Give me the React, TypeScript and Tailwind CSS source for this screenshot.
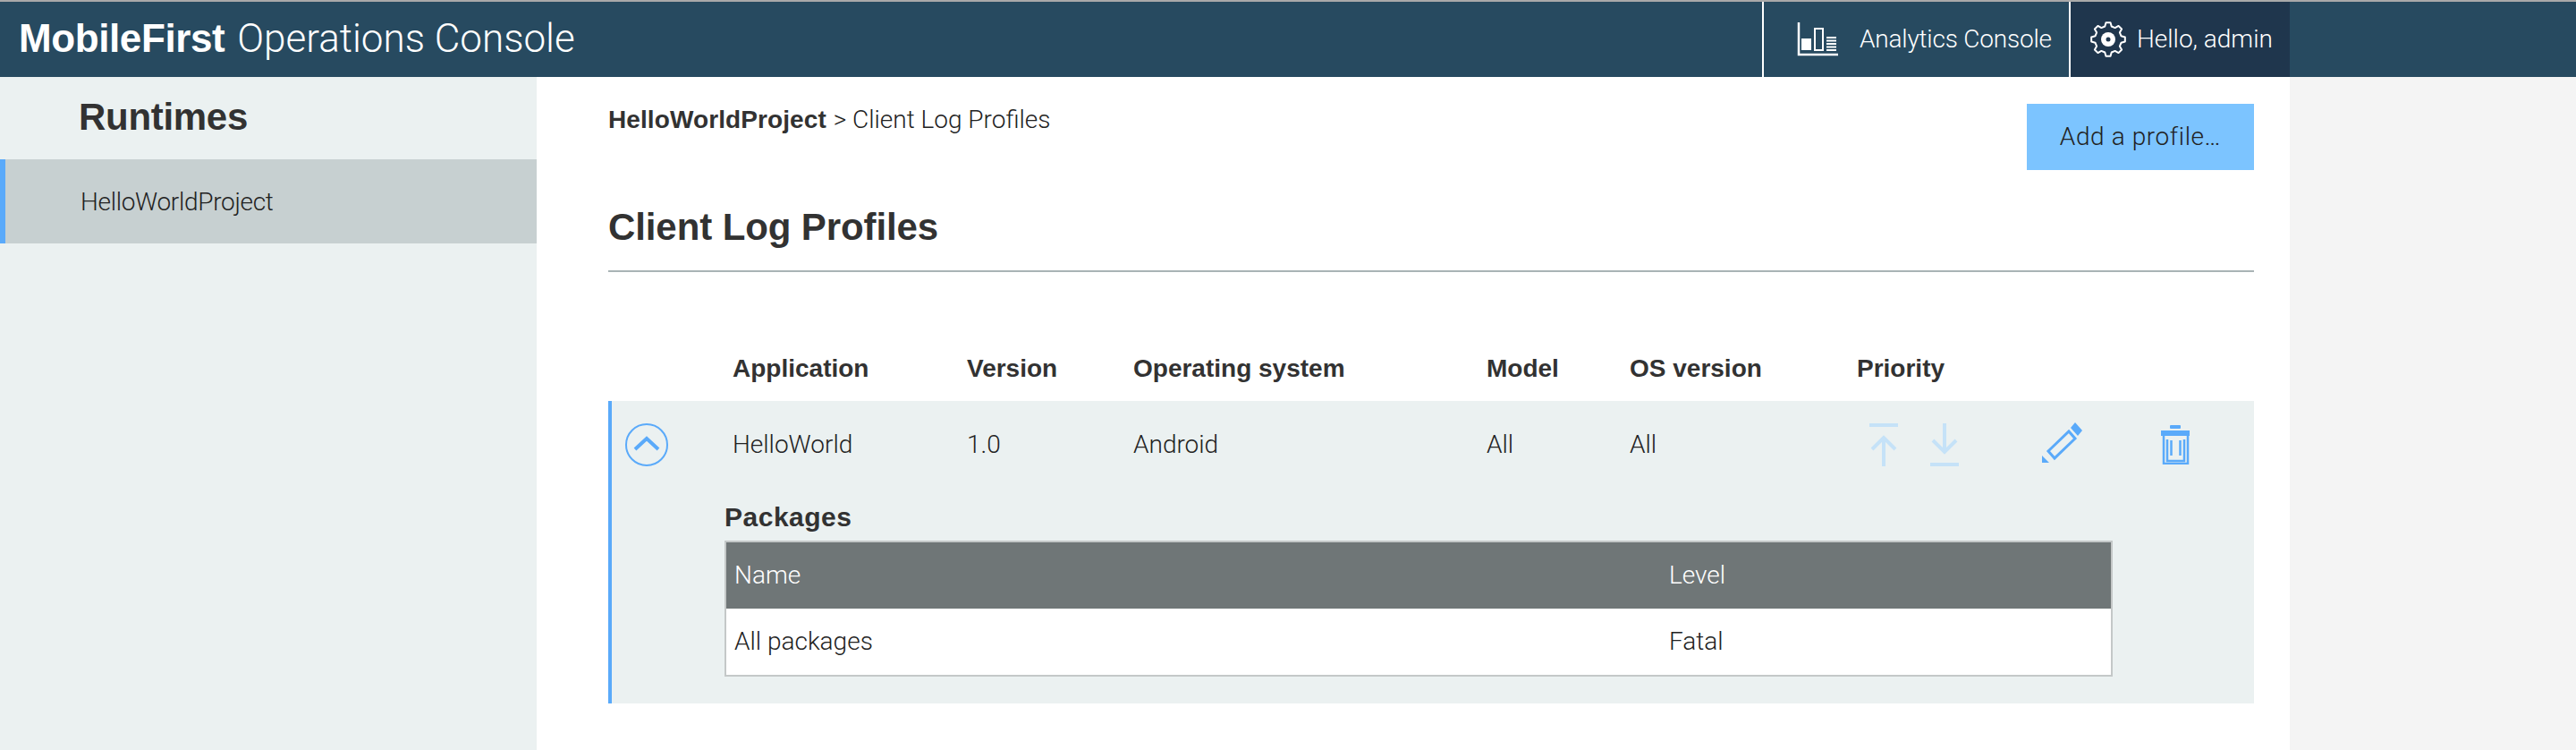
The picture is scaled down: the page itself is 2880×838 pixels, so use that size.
import React from "react";

const sans = "font-['Liberation_Sans',Arial,sans-serif]";
const thin = "font-['Roboto',Arial,sans-serif] font-light";

function ChartIcon() {
  return (
    <svg width="46" height="38" viewBox="0 0 46 38" fill="none" className="block">
      <path d="M2 0V36H46" stroke="#fff" strokeWidth="2.5" />
      <rect x="5" y="18" width="11" height="13" fill="#fff" />
      <rect x="20" y="7" width="9" height="24" stroke="#fff" strokeWidth="2" />
      <path d="M33 17H44M33 20.5H44M33 24H44M33 27.5H44M33 31H44" stroke="#fff" strokeWidth="2" />
    </svg>
  );
}

function gearPath() {
  const pts: string[] = [];
  const teeth = 8;
  const step = (Math.PI * 2) / teeth;
  for (let i = 0; i < teeth; i++) {
    const a = i * step - Math.PI / 2;
    const p = (r: number, d: number) => {
      const x = 21 + r * Math.cos(a + d * step);
      const y = 21 + r * Math.sin(a + d * step);
      return `${x.toFixed(2)} ${y.toFixed(2)}`;
    };
    pts.push(p(15, -0.32), p(19, -0.17), p(19, 0.17), p(15, 0.32));
  }
  return `M${pts.join("L")}Z`;
}

function GearIcon() {
  return (
    <svg width="42" height="42" viewBox="0 0 42 42" fill="none" className="block">
      <path d={gearPath()} stroke="#fff" strokeWidth="2" strokeLinejoin="round" />
      <circle cx="21" cy="21" r="8" fill="#fff" />
      <circle cx="21" cy="21" r="2.5" fill="#1f364d" />
    </svg>
  );
}

export default function App() {
  return (
    <div className={`${sans} flex h-[838px] w-[2880px] flex-col overflow-hidden bg-[#f4f4f4] text-[#323232]`}>
      <header className="flex h-[86px] shrink-0 items-stretch border-t-2 border-[#a9a9a9] bg-[#274a60] text-white">
        <div className="flex w-[1970px] items-center pb-[2px] pl-[21px] text-[44px]">
          <b className="tracking-[-0.4px]">MobileFirst</b>
          <span className={`${thin} ml-[14px]`}>Operations Console</span>
        </div>
        <div className={`${thin} flex w-[345px] items-center border-x-2 border-white pl-[37px] text-[28px]`}>
          <ChartIcon />
          <span className="ml-[24px] tracking-[-0.2px]">Analytics Console</span>
        </div>
        <div className={`${thin} flex w-[245px] items-center bg-[#1f364d] pl-[21px] text-[28px]`}>
          <GearIcon />
          <span className="ml-[11px]">Hello, admin</span>
        </div>
      </header>

      <div className="flex min-h-0 flex-1">
        <aside className="w-[600px] shrink-0 bg-[#ebf1f1]">
          <h2 className="flex h-[92px] items-center pb-[4px] pl-[88px] text-[42px] font-bold tracking-[-0.3px]">Runtimes</h2>
          <div className={`${thin} flex h-[94px] items-center border-l-[6px] border-[#5aaafa] bg-[#c7d0d1] pl-[84px] pt-[2px] text-[28px] tracking-[-0.3px] text-[#222]`}>
            HelloWorldProject
          </div>
        </aside>

        <main className="w-[1960px] shrink-0 bg-white pl-[80px] pr-[40px]">
          <div className="flex h-[104px] items-start justify-between pt-[30px]">
            <div className="-mt-[3px] text-[28px]">
              <b className="tracking-[0.1px]">HelloWorldProject</b> <span className={`${thin} text-[#222]`}>&gt; Client Log Profiles</span>
            </div>
            <button className={`${thin} flex h-[74px] w-[254px] items-center justify-center bg-[#7cc4ff] text-[28px] tracking-[0.6px] text-[#222]`}>
              Add a profile…
            </button>
          </div>
          <h1 className="flex h-[114px] items-center border-b-2 border-[#a9b4b5] pt-[14px] text-[42px] font-bold tracking-[-0.1px]">
            Client Log Profiles
          </h1>

          <div className="mt-[72px] flex h-[72px] items-center text-[28px] font-bold">
            <span className="ml-[139px] w-[262px]">Application</span>
            <span className="w-[186px]">Version</span>
            <span className="w-[395px]">Operating system</span>
            <span className="w-[160px]">Model</span>
            <span className="w-[254px]">OS version</span>
            <span>Priority</span>
          </div>

          <section className="h-[338px] border-l-4 border-[#5aaafa] bg-[#ebf1f1] pl-[135px] text-[28px]">
            <div className={`${thin} relative flex h-[98px] items-center text-[#222]`}>
              <svg width="50" height="50" viewBox="0 0 50 50" fill="none" className="absolute -left-[121px] top-[24px]">
                <circle cx="25" cy="25" r="23" stroke="#5aaafa" strokeWidth="2" />
                <path d="M12 30 25 18l13 12" stroke="#5aaafa" strokeWidth="4" />
              </svg>
              <span className="w-[262px]">HelloWorld</span>
              <span className="w-[186px]">1.0</span>
              <span className="w-[395px]">Android</span>
              <span className="w-[160px]">All</span>
              <span className="w-[254px]">All</span>
              <div className="flex items-center">
                <svg width="32" height="48" viewBox="0 0 32 48" fill="none" className="ml-[14px]">
                  <path d="M0 2H32M16 48V17M3 29 16 16l13 13" stroke="#c5e2f8" strokeWidth="4" />
                </svg>
                <svg width="32" height="48" viewBox="0 0 32 48" fill="none" className="ml-[36px]">
                  <path d="M0 46H32M16 0V32M3 19 16 32l13-13" stroke="#c5e2f8" strokeWidth="4" />
                </svg>
                <svg width="45" height="45" viewBox="0 0 45 45" fill="none" className="-mt-[5px] ml-[93px]">
                  <path d="M7 32 30 10l7 8-23 22z" stroke="#5aaafa" strokeWidth="3" />
                  <path d="m32 6 5-6 8 9-5 6zM0 37l8 8H0z" fill="#5aaafa" />
                </svg>
                <svg width="32" height="44" viewBox="0 0 32 44" fill="none" className="ml-[88px]">
                  <rect x="10" y="0" width="12" height="4" rx="1" fill="#5aaafa" />
                  <rect x="0" y="6" width="32" height="6" fill="#5aaafa" />
                  <path d="M3 12V43H30V12M7 16V40H26V16M11.5 17V34M21.5 17V34" stroke="#5aaafa" strokeWidth="2.5" />
                </svg>
              </div>
            </div>
            <h3 className="-ml-[9px] flex h-[58px] items-center pt-[4px] text-[30px] font-bold tracking-[0.5px]">Packages</h3>
            <div className={`${thin} -ml-[9px] w-[1552px] border-2 border-[#c4c8c8] bg-white text-[#222]`}>
              <div className="flex h-[74px] items-center bg-[#6f7677] pl-[9px] text-white">
                <span className="w-[1045px]">Name</span>
                <span>Level</span>
              </div>
              <div className="flex h-[74px] items-center pl-[9px]">
                <span className="w-[1045px]">All packages</span>
                <span>Fatal</span>
              </div>
            </div>
          </section>
        </main>
      </div>
    </div>
  );
}
